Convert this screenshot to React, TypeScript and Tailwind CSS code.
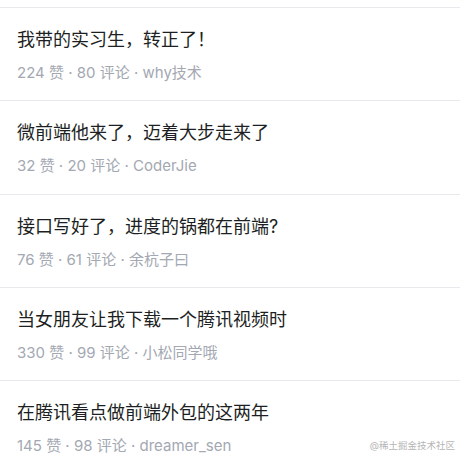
import React from "react";

const items = [
  { title: "我带的实习生，转正了！", likes: 224, comments: 80, author: "why技术" },
  { title: "微前端他来了，迈着大步走来了", likes: 32, comments: 20, author: "CoderJie" },
  { title: "接口写好了，进度的锅都在前端?", likes: 76, comments: 61, author: "余杭子曰" },
  { title: "当女朋友让我下载一个腾讯视频时", likes: 330, comments: 99, author: "小松同学哦" },
  { title: "在腾讯看点做前端外包的这两年", likes: 145, comments: 98, author: "dreamer_sen" },
];

export default function App() {
  return (
    <div
      className="relative w-[460px] h-[460px] overflow-hidden bg-white"
      style={{ fontFamily: '"Inter", "Noto Sans CJK SC", sans-serif' }}
    >
      <div className="h-[7px]" />
      {items.map((it, i) => (
        <div key={i} className="border-t border-[#e8e9ec] pl-[17px] pt-[19px] pb-[17.25px] flex flex-col gap-[10px]">
          <div className="text-[18px] leading-[26px] text-[#1d1f23]">{it.title}</div>
          <div className="text-[15px] leading-[20px] text-[#a3a8b2]">
            {it.likes} 赞 · {it.comments} 评论 · {it.author}
          </div>
        </div>
      ))}
      <div className="absolute right-[5px] bottom-[7px] text-[9.5px] leading-[14px] text-[#b5b5b5]">
        @稀土掘金技术社区
      </div>
    </div>
  );
}
